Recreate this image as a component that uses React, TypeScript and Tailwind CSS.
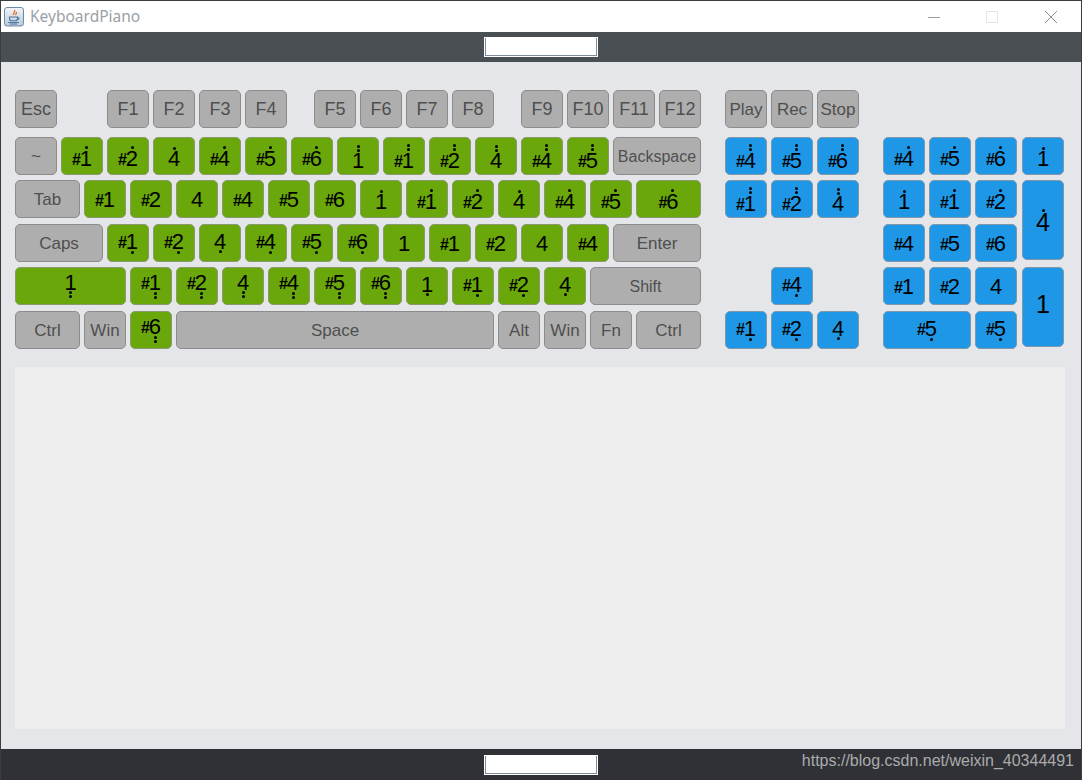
import React from "react";

const rowGap = ["", "mt-[9px]", "mt-[5px]", "mt-[6px]", "mt-[5px]", "mt-[6px]"];

function Dots({ n }: { n: number }) {
  if (!n) return null;
  return (
    <span className="flex flex-col items-center gap-[1px] w-[12px]">
      {Array.from({ length: n }).map((_, i) => (
        <span key={i} className="block w-[3px] h-[3px] rounded-full bg-black" />
      ))}
    </span>
  );
}

function Note({ code, big }: { code: string; big?: boolean }) {
  const sharp = code.startsWith("#");
  const digit = code.replace(/[^0-9]/g, "");
  const up = (code.match(/\^/g) || []).length;
  const down = (code.match(/_/g) || []).length;
  return (
    <span className={`flex flex-col items-end text-black ${big ? "gap-[2px]" : "gap-[1px]"}`}>
      <Dots n={up} />
      <span className="flex items-center">
        {sharp && <span className="text-[16px] leading-[15px] font-bold mt-[2px] -mr-[1px]">#</span>}
        <span className={big ? "text-[25px] leading-[17px]" : "text-[22px] leading-[15px]"}>{digit}</span>
      </span>
      <Dots n={down} />
    </span>
  );
}

function Gray({ label, w = "w-[42px]", size = "text-[17px]" }: { label: string; w?: string; size?: string }) {
  return (
    <div className={`${w} ${size} h-[38px] shrink-0 flex items-center justify-center pt-[1px] rounded-[5px] border border-[#8c8c8c] bg-[#aeaeae] text-[#4f4f4f]`}>
      {label}
    </div>
  );
}

function Green({ code, w = "w-[42px]" }: { code: string; w?: string }) {
  return (
    <div className={`${w} h-[38px] shrink-0 flex items-center justify-center rounded-[5px] border border-[#8a9a70] bg-[#6aa70a]`}>
      <Note code={code} />
    </div>
  );
}

function Blue({ code, w = "w-[42px]" }: { code: string; w?: string }) {
  return (
    <div className={`${w} h-[38px] shrink-0 flex items-center justify-center rounded-[5px] border border-[#7f97a8] bg-[#1e98e6]`}>
      <Note code={code} />
    </div>
  );
}

function Row({ i, children, className = "" }: { i: number; children?: React.ReactNode; className?: string }) {
  return <div className={`flex gap-[4px] h-[38px] ${rowGap[i]} ${className}`}>{children}</div>;
}

function JavaIcon() {
  return (
    <svg width="20" height="20" viewBox="0 0 20 20">
      <defs>
        <linearGradient id="jv" x1="0" y1="0" x2="0" y2="1">
          <stop offset="0" stopColor="#f4f6f8" />
          <stop offset="1" stopColor="#b8c8d8" />
        </linearGradient>
      </defs>
      <rect x="0.5" y="0.5" width="19" height="18.5" rx="2.5" fill="url(#jv)" stroke="#6d89a6" />
      <path d="M10.5 3c1.5 2-2 3-1 5M12.5 5c.5 1.2-1.2 1.8-.8 3" fill="none" stroke="#e0701c" strokeWidth="1.3" />
      <path d="M5.5 10h8v1.5c0 1.5-1 2.3-2 2.3H7.5c-1 0-2-.8-2-2.3zM13.5 10.5c2-.4 2 2-.4 2.2" fill="none" stroke="#4d77a3" strokeWidth="1.1" />
      <path d="M4 15.5h11M6 17h7" stroke="#4d77a3" strokeWidth="1" />
    </svg>
  );
}

function Field() {
  return (
    <div className="w-[114px] h-[20px] bg-white border border-white">
      <div className="h-full border-l border-r border-b border-[#7d8b9a]" />
    </div>
  );
}

const F = "text-[18px]";

export default function App() {
  return (
    <div className="w-[1082px] h-[780px] flex flex-col overflow-hidden border-x border-t border-[#3d3d3d] bg-[#e4e6ea] font-['Liberation_Sans',Arial,sans-serif]">
      <div className="h-[31px] shrink-0 bg-white flex items-center pl-[3px]">
        <JavaIcon />
        <span className="ml-[6px] text-[15.5px] text-[#9a9fa6] font-['Noto_Sans',sans-serif]">KeyboardPiano</span>
        <div className="ml-auto flex items-center">
          <svg width="14" height="14" viewBox="0 0 14 14" className="mr-[44px]">
            <path d="M1 7.5h12" stroke="#9b9b9b" />
          </svg>
          <svg width="14" height="14" viewBox="0 0 14 14" className="mr-[45px]">
            <rect x="1.5" y="1.5" width="11" height="11" fill="none" stroke="#e6e6e6" />
          </svg>
          <svg width="14" height="14" viewBox="0 0 14 14" className="mr-[23px]">
            <path d="M1 1l12 12M13 1L1 13" stroke="#8c8c8c" />
          </svg>
        </div>
      </div>
      <div className="h-[30px] shrink-0 bg-[#4a4f53] flex items-center justify-center pr-[1px]">
        <Field />
      </div>

      <div className="flex-1 flex flex-col pt-[28px] pl-[14px] pr-[16px] pb-[20px] min-h-0">
        <div className="flex shrink-0">
          <div className="w-[686px]">
            <Row i={0}>
              <Gray label="Esc" size={F} />
              <div className="w-[42px]" />
              <Gray label="F1" size={F} />
              <Gray label="F2" size={F} />
              <Gray label="F3" size={F} />
              <Gray label="F4" size={F} />
              <div className="w-[19px]" />
              <Gray label="F5" size={F} />
              <Gray label="F6" size={F} />
              <Gray label="F7" size={F} />
              <Gray label="F8" size={F} />
              <div className="w-[19px]" />
              <Gray label="F9" size={F} />
              <Gray label="F10" size={F} />
              <Gray label="F11" size={F} />
              <Gray label="F12" size={F} />
            </Row>
            <Row i={1}>
              <Gray label="~" />
              {["#1^", "#2^", "4^", "#4^", "#5^", "#6^", "1^^", "#1^^", "#2^^", "4^^", "#4^^", "#5^^"].map((c, k) => (
                <Green key={k} code={c} />
              ))}
              <Gray label="Backspace" w="w-[88px]" size="text-[16px]" />
            </Row>
            <Row i={2}>
              <Gray label="Tab" w="w-[65px]" />
              {["#1", "#2", "4", "#4", "#5", "#6", "1^", "#1^", "#2^", "4^", "#4^", "#5^"].map((c, k) => (
                <Green key={k} code={c} />
              ))}
              <Green code="#6^" w="w-[65px]" />
            </Row>
            <Row i={3}>
              <Gray label="Caps" w="w-[88px]" />
              {["#1_", "#2_", "4_", "#4_", "#5_", "#6_", "1", "#1", "#2", "4", "#4"].map((c, k) => (
                <Green key={k} code={c} />
              ))}
              <Gray label="Enter" w="w-[88px]" />
            </Row>
            <Row i={4}>
              <Green code="1__" w="w-[111px]" />
              {["#1__", "#2__", "4__", "#4__", "#5__", "#6__", "1_", "#1_", "#2_", "4_"].map((c, k) => (
                <Green key={k} code={c} />
              ))}
              <Gray label="Shift" w="w-[111px]" size="text-[16px]" />
            </Row>
            <Row i={5}>
              <Gray label="Ctrl" w="w-[65px]" />
              <Gray label="Win" />
              <Green code="#6__" />
              <Gray label="Space" w="w-[318px]" />
              <Gray label="Alt" />
              <Gray label="Win" />
              <Gray label="Fn" />
              <Gray label="Ctrl" w="w-[65px]" />
            </Row>
          </div>

          <div className="ml-[24px] w-[134px]">
            <Row i={0}>
              <Gray label="Play" />
              <Gray label="Rec" />
              <Gray label="Stop" />
            </Row>
            <Row i={1}>
              <Blue code="#4^^" />
              <Blue code="#5^^" />
              <Blue code="#6^^" />
            </Row>
            <Row i={2}>
              <Blue code="#1^^" />
              <Blue code="#2^^" />
              <Blue code="4^^" />
            </Row>
            <Row i={3} />
            <Row i={4} className="justify-center">
              <Blue code="#4_" />
            </Row>
            <Row i={5}>
              <Blue code="#1_" />
              <Blue code="#2_" />
              <Blue code="4_" />
            </Row>
          </div>

          <div className="ml-[24px] flex pt-[47px]">
            <div className="w-[134px]">
              <Row i={0}>
                <Blue code="#4^" />
                <Blue code="#5^" />
                <Blue code="#6^" />
              </Row>
              <Row i={2}>
                <Blue code="1^" />
                <Blue code="#1^" />
                <Blue code="#2^" />
              </Row>
              <Row i={3}>
                <Blue code="#4" />
                <Blue code="#5" />
                <Blue code="#6" />
              </Row>
              <Row i={4}>
                <Blue code="#1" />
                <Blue code="#2" />
                <Blue code="4" />
              </Row>
              <Row i={5}>
                <Blue code="#5_" w="w-[88px]" />
                <Blue code="#5_" />
              </Row>
            </div>
            <div className="ml-[5px] w-[42px] flex flex-col">
              <Blue code="1^" />
              <div className="mt-[5px] h-[80px] flex items-center justify-center rounded-[5px] border border-[#7f97a8] bg-[#1e98e6]">
                <Note code="4^" big />
              </div>
              <div className="mt-[7px] h-[80px] flex items-center justify-center rounded-[5px] border border-[#7f97a8] bg-[#1e98e6] pb-[6px]">
                <Note code="1" big />
              </div>
            </div>
          </div>
        </div>

        <div className="mt-[18px] flex-1 bg-[#eeeeee] rounded-[2px]" />
      </div>

      <div className="h-[31px] shrink-0 bg-[#2f3136] relative flex items-center justify-center pr-[1px]">
        <Field />
        <span className="absolute right-[7px] top-[2px] text-[16px] text-[#ababab] leading-[20px]">https://blog.csdn.net/weixin_40344491</span>
      </div>
    </div>
  );
}
